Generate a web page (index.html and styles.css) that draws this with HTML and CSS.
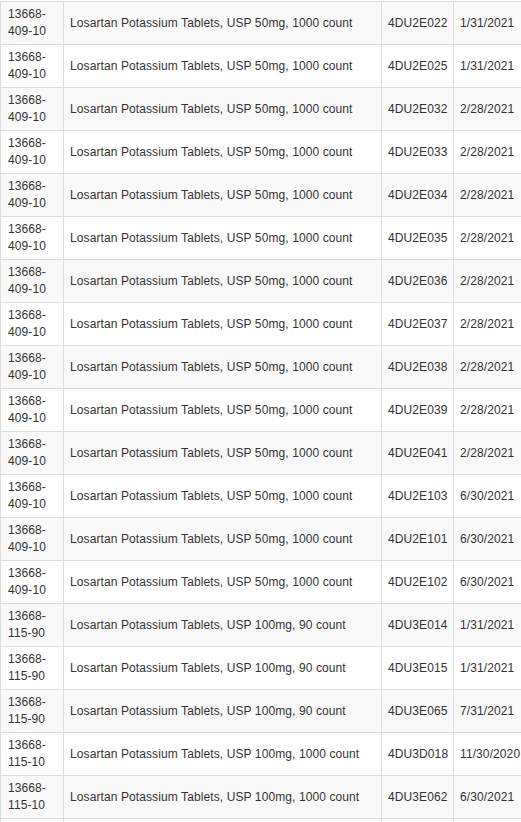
FILE: index.html
```html
<!DOCTYPE html>
<html>
<head>
<meta charset="utf-8">
<link rel="stylesheet" href="styles.css">
</head>
<body>
<table class="lots">
<colgroup><col class="c-ndc"><col class="c-desc"><col class="c-lot"><col class="c-exp"></colgroup>
<tbody>
<tr><td>13668-409-10</td><td>Losartan Potassium Tablets, USP 50mg, 1000 count</td><td>4DU2E022</td><td>1/31/2021</td></tr>
<tr><td>13668-409-10</td><td>Losartan Potassium Tablets, USP 50mg, 1000 count</td><td>4DU2E025</td><td>1/31/2021</td></tr>
<tr><td>13668-409-10</td><td>Losartan Potassium Tablets, USP 50mg, 1000 count</td><td>4DU2E032</td><td>2/28/2021</td></tr>
<tr><td>13668-409-10</td><td>Losartan Potassium Tablets, USP 50mg, 1000 count</td><td>4DU2E033</td><td>2/28/2021</td></tr>
<tr><td>13668-409-10</td><td>Losartan Potassium Tablets, USP 50mg, 1000 count</td><td>4DU2E034</td><td>2/28/2021</td></tr>
<tr><td>13668-409-10</td><td>Losartan Potassium Tablets, USP 50mg, 1000 count</td><td>4DU2E035</td><td>2/28/2021</td></tr>
<tr><td>13668-409-10</td><td>Losartan Potassium Tablets, USP 50mg, 1000 count</td><td>4DU2E036</td><td>2/28/2021</td></tr>
<tr><td>13668-409-10</td><td>Losartan Potassium Tablets, USP 50mg, 1000 count</td><td>4DU2E037</td><td>2/28/2021</td></tr>
<tr><td>13668-409-10</td><td>Losartan Potassium Tablets, USP 50mg, 1000 count</td><td>4DU2E038</td><td>2/28/2021</td></tr>
<tr><td>13668-409-10</td><td>Losartan Potassium Tablets, USP 50mg, 1000 count</td><td>4DU2E039</td><td>2/28/2021</td></tr>
<tr><td>13668-409-10</td><td>Losartan Potassium Tablets, USP 50mg, 1000 count</td><td>4DU2E041</td><td>2/28/2021</td></tr>
<tr><td>13668-409-10</td><td>Losartan Potassium Tablets, USP 50mg, 1000 count</td><td>4DU2E103</td><td>6/30/2021</td></tr>
<tr><td>13668-409-10</td><td>Losartan Potassium Tablets, USP 50mg, 1000 count</td><td>4DU2E101</td><td>6/30/2021</td></tr>
<tr><td>13668-409-10</td><td>Losartan Potassium Tablets, USP 50mg, 1000 count</td><td>4DU2E102</td><td>6/30/2021</td></tr>
<tr><td>13668-115-90</td><td>Losartan Potassium Tablets, USP 100mg, 90 count</td><td>4DU3E014</td><td>1/31/2021</td></tr>
<tr><td>13668-115-90</td><td>Losartan Potassium Tablets, USP 100mg, 90 count</td><td>4DU3E015</td><td>1/31/2021</td></tr>
<tr><td>13668-115-90</td><td>Losartan Potassium Tablets, USP 100mg, 90 count</td><td>4DU3E065</td><td>7/31/2021</td></tr>
<tr><td>13668-115-10</td><td>Losartan Potassium Tablets, USP 100mg, 1000 count</td><td>4DU3D018</td><td>11/30/2020</td></tr>
<tr><td>13668-115-10</td><td>Losartan Potassium Tablets, USP 100mg, 1000 count</td><td>4DU3E062</td><td>6/30/2021</td></tr>
<tr><td></td><td></td><td></td><td></td></tr>
</tbody>
</table>
</body>
</html>
```
FILE: styles.css
```css
html, body {
  margin: 0;
  padding: 0;
  overflow: hidden;
  background: #fff;
}
body {
  padding-top: 1px;
  font-family: "Liberation Sans", Arial, sans-serif;
  font-size: 12px;
  line-height: 17px;
  letter-spacing: 0.1px;
  color: #333;
}
.lots {
  border-collapse: collapse;
  table-layout: fixed;
  width: 527px;
}
.c-ndc { width: 63px; }
.c-desc { width: 318px; }
.c-lot { width: 72px; }
.c-exp { width: 74px; }
.lots td {
  border: 1px solid #ddd;
  padding: 4px 5px 4px 6px;
  vertical-align: middle;
  height: 34px;
  box-sizing: content-box;
}
.lots tr:nth-child(odd) td {
  background: #f9f9f9;
}
.lots td:first-child {
  padding-left: 7px;
  padding-right: 4px;
}
```
